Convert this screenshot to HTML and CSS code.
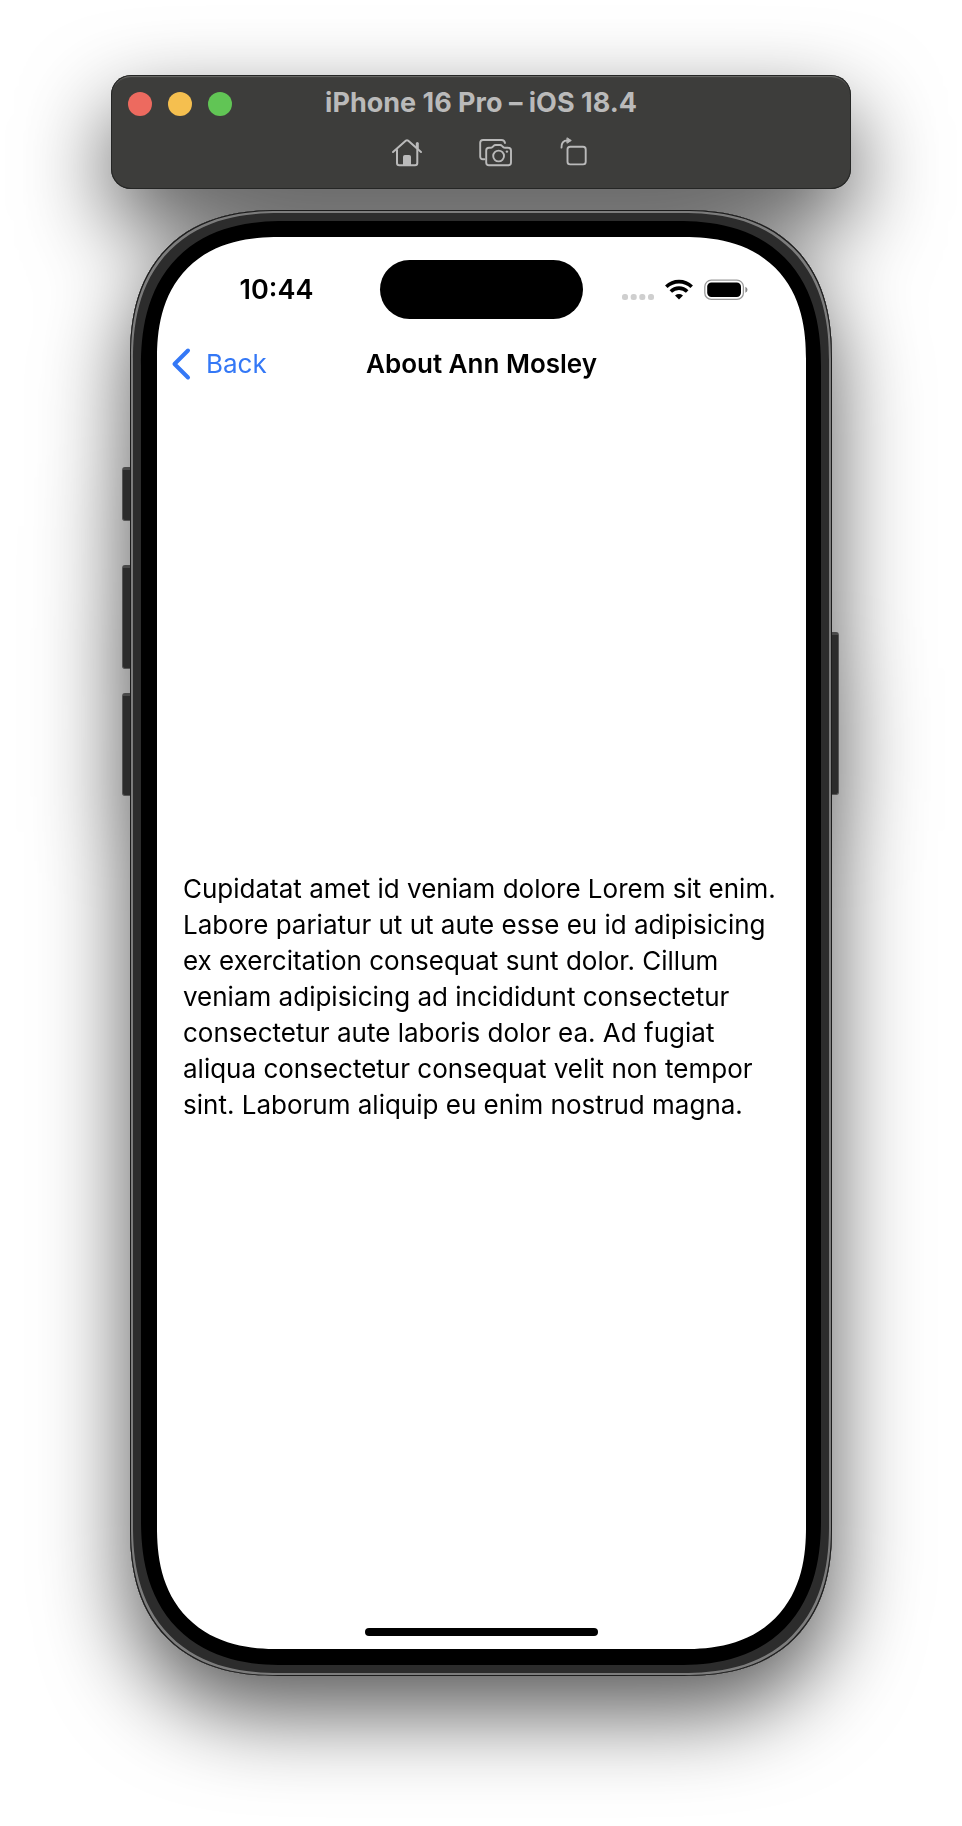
FILE: index.html
```html
<!DOCTYPE html>
<html lang="en">
<head>
<meta charset="utf-8">
<meta name="viewport" content="width=device-width, initial-scale=1">
<title>iPhone 16 Pro – iOS 18.4</title>
<link rel="stylesheet" href="styles.css">
</head>
<body>
<div class="simulator">
  <header class="toolbar">
    <div class="titlebar">
      <div class="lights">
        <button class="light light-close" type="button" aria-label="Close"></button>
        <button class="light light-minimize" type="button" aria-label="Minimize"></button>
        <button class="light light-zoom" type="button" aria-label="Zoom"></button>
      </div>
      <div class="window-title">iPhone 16 Pro – iOS 18.4</div>
    </div>
    <div class="tools">
      <button class="tool tool-home" type="button" aria-label="Home">
        <svg width="32" height="32" viewBox="0 0 32 32" fill="none" stroke="currentColor" stroke-width="2" stroke-linecap="round" stroke-linejoin="round">
          <path d="M2 16 15 4.600Q16 3.800 17 4.600L30 16"/>
          <path d="M6 14V27Q6 29.300 8.300 29.300H24Q26.300 29.300 26.300 27V14"/>
          <path d="M26.300 12V7.500" stroke-width="3"/>
          <path d="M12.500 29V20.500Q12.500 19.500 13.500 19.500H18.500Q19.500 19.500 19.500 20.500V29Z" fill="currentColor" stroke-width="1"/>
        </svg>
      </button>
      <button class="tool" type="button" aria-label="Screenshot">
        <svg width="36" height="32" viewBox="0 0 36 32" fill="none" stroke="currentColor" stroke-width="1.900" stroke-linecap="round" stroke-linejoin="round">
          <path d="M6.500 23.300H5Q2.200 23.300 2.200 20.500V6.800Q2.200 4 5 4H23.500Q26.500 4 27 7"/>
          <path d="M11 11.800H12.500Q13.700 11.800 14.500 11L15.600 9.900Q16.400 9 17.600 9H22Q23.200 9 24 9.900L25.100 11Q25.900 11.800 27.100 11.800H30Q33 11.800 33 14.500V26.500Q33 29.300 30 29.300H11Q8.200 29.300 8.200 26.500V14.500Q8.200 11.800 11 11.800Z"/>
          <circle cx="20.600" cy="20" r="5.400"/>
          <circle cx="28.900" cy="15.600" r="1.200" fill="currentColor" stroke="none"/>
        </svg>
      </button>
      <button class="tool" type="button" aria-label="Rotate">
        <svg width="30" height="32" viewBox="0 0 30 32" fill="none" stroke="currentColor" stroke-width="1.900" stroke-linecap="round" stroke-linejoin="round">
          <rect x="8.500" y="10.800" width="18.200" height="17.600" rx="2.600"/>
          <path d="M2.500 11.600Q2.100 4.500 8.500 4.500"/>
          <path d="M8.300 2 12.300 4.500 8.300 7Z" fill="currentColor" stroke-width="1"/>
        </svg>
      </button>
    </div>
  </header>

  <div class="phone">
    <span class="side-button action"></span>
    <span class="side-button volume-up"></span>
    <span class="side-button volume-down"></span>
    <span class="side-button power"></span>
    <div class="frame">
      <div class="screen">
        <div class="status">
          <time class="clock">10:44</time>
          <div class="island"></div>
          <div class="indicators">
            <svg width="32" height="22" viewBox="0 0 32 22" fill="#cfcfcf">
              <rect x="0" y="15" width="6" height="6" rx="2.500"/><rect x="8.700" y="15" width="6" height="6" rx="2.500"/><rect x="17.300" y="15" width="6" height="6" rx="2.500"/><rect x="26" y="15" width="6" height="6" rx="2.500"/>
            </svg>
            <svg width="28" height="22" viewBox="0 0 28 22" fill="none" stroke="#000" stroke-width="3.600">
              <path d="M1.300 7.700A18.300 18.300 0 0 1 26.700 7.700"/>
              <path d="M5.800 12.500A11.700 11.700 0 0 1 22.200 12.500"/>
              <path d="M14 20.500 10 16.500Q14 13.700 18 16.500Z" fill="#000" stroke="none"/>
            </svg>
            <svg width="44" height="22" viewBox="0 0 44 22">
              <rect x=".8" y="1.200" width="38.600" height="19.200" rx="6.500" fill="none" stroke="#999" stroke-width="1.300"/>
              <rect x="3.200" y="3.600" width="33.800" height="14.400" rx="4.200"/>
              <path d="M41.400 7.800Q43.500 8.800 43.500 10.800T41.400 13.800Z" fill="#888"/>
            </svg>
          </div>
        </div>
        <nav class="navbar">
          <a class="back" href="#">
            <svg width="20" height="34" viewBox="0 0 20 34" fill="none" stroke="currentColor" stroke-width="4" stroke-linecap="round" stroke-linejoin="round"><path d="M17 3.500 3.500 17 17 30.500"/></svg>
            <span>Back</span>
          </a>
          <h1 class="page-title">About Ann Mosley</h1>
        </nav>
        <main class="content">
          <p class="bio">Cupidatat amet id veniam dolore Lorem sit enim.<br>Labore pariatur ut ut aute esse eu id adipisicing<br>ex exercitation consequat sunt dolor. Cillum<br>veniam adipisicing ad incididunt consectetur<br>consectetur aute laboris dolor ea. Ad fugiat<br>aliqua consectetur consequat velit non tempor<br>sint. Laborum aliquip eu enim nostrud magna.</p>
        </main>
        <footer class="home-area"><div class="home-indicator"></div></footer>
      </div>
    </div>
  </div>
</div>
</body>
</html>
```

FILE: styles.css
```css
* {
  box-sizing: border-box;
}

body {
  margin: 0;
  background: #fff;
  color: #000;
  font-family: Inter, "Liberation Sans", sans-serif;
}

button {
  padding: 0;
  border: 0;
  background: none;
  color: inherit;
}

svg {
  display: block;
}

.simulator {
  display: flex;
  flex-direction: column;
  gap: 21px;
  max-width: 962px;
  margin: 0 auto;
  padding: 75px 111px 150px;
  filter: drop-shadow(0 36px 44px rgba(0, 0, 0, 0.66));
}

.toolbar {
  display: flex;
  flex-direction: column;
  gap: 16px;
  padding: 13px 17px 21px;
  border-radius: 20px;
  background: #3d3d3b;
  color: #bababa;
  box-shadow: inset 0 0 0 1px #252625, inset 0 2px 1px #6c6c6a;
}

.titlebar {
  display: grid;
  grid-template-columns: 1fr auto 1fr;
  align-items: center;
  height: 32px;
}

.lights {
  display: flex;
  gap: 16px;
}

.light {
  width: 24px;
  height: 24px;
  border-radius: 50%;
}

.light-close {
  background: #ed6a5f;
}

.light-minimize {
  background: #f5bf4f;
}

.light-zoom {
  background: #61c555;
}

.window-title {
  padding-bottom: 2px;
  font-size: 27px;
  font-weight: 700;
  line-height: 30px;
  white-space: nowrap;
}

.tools {
  display: flex;
  justify-content: center;
  gap: 45px;
  padding-left: 18px;
}

.tool-home {
  margin-right: 10px;
}

.phone {
  position: relative;
  margin: 0 19px;
}

.frame {
  position: relative;
  display: flex;
  aspect-ratio: 702 / 1466;
  padding: 27px 26px 27px 27px;
  border-radius: 148px;
  corner-shape: superellipse(1.25);
  background: #000;
  box-shadow: inset 0 0 0 1px #1c1c1c, inset 0 0 0 3px #7c7c7c, inset 0 0 0 11px #2c2c2c;
}

.side-button {
  position: absolute;
  left: -8px;
  width: 16px;
  border: 1px solid #555;
  border-top: 3px solid #4a4a4a;
  border-radius: 3px;
  background: #2c2c2c;
}

.action {
  top: 257px;
  height: 54px;
}

.volume-up {
  top: 355px;
  height: 104px;
}

.volume-down {
  top: 483px;
  height: 103px;
}

.power {
  top: 422px;
  right: -7px;
  left: auto;
  height: 163px;
}

.screen {
  display: flex;
  flex: 1;
  flex-direction: column;
  min-width: 0;
  padding-top: 23px;
  border-radius: 122px;
  corner-shape: superellipse(1.25);
  background: #fff;
}

.status {
  display: grid;
  grid-template-columns: 1fr 203px 1fr;
  align-items: center;
}

.clock {
  padding-left: 16px;
  font-size: 27px;
  font-weight: 600;
  line-height: 36px;
  text-align: center;
}

.island {
  height: 59px;
  border-radius: 30px;
  background: #000;
}

.indicators {
  display: flex;
  justify-content: center;
  gap: 11px;
  padding-right: 20px;
}

.navbar {
  display: grid;
  grid-template-columns: 1fr auto 1fr;
  align-items: center;
  height: 70px;
  margin-top: 10px;
  padding: 0 14px;
}

.back {
  display: flex;
  align-items: center;
  gap: 15px;
  color: #3478f6;
  font-size: 26px;
  line-height: 36px;
  text-decoration: none;
}

.page-title {
  margin: 0;
  font-size: 26px;
  font-weight: 600;
  line-height: 36px;
}

.content {
  display: flex;
  flex: 1;
  align-items: center;
  padding: 0 26px;
}

.bio {
  margin: 0;
  font-size: 26px;
  line-height: 36px;
  white-space: nowrap;
}

.home-area {
  display: flex;
  justify-content: center;
  padding: 34px 0 13px;
}

.home-indicator {
  width: 36%;
  height: 8px;
  border-radius: 4px;
  background: #000;
}
```
